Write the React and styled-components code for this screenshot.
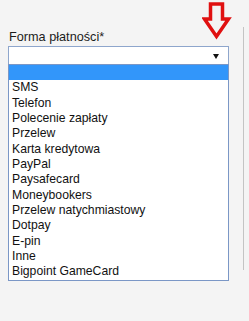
import React from "react";
import styled, { createGlobalStyle } from "styled-components";

const Global = createGlobalStyle`
  html, body { margin: 0; padding: 0; background: #f4f4f4; }
  body { font-family: Arial, "Liberation Sans", sans-serif; }
`;

const Page = styled.div`
  position: relative;
  width: 249px;
  height: 321px;
  display: flex;
  align-items: flex-start;
  overflow: hidden;
`;

const Field = styled.div`
  width: 221px;
  margin-left: 8px;
  padding-top: 30px;
  display: flex;
  flex-direction: column;
`;

const Label = styled.label`
  font-size: 12.7px;
  line-height: 15px;
  color: #1c1c1c;
  padding-left: 1px;
  margin-bottom: 1px;
`;

const SelectBox = styled.div`
  box-sizing: border-box;
  height: 18px;
  border: 1px solid #8ea6cc;
  border-bottom: none;
  background: #fff;
  display: flex;
  align-items: center;
  justify-content: flex-end;
  padding-right: 9px;
`;

const Caret = styled.span`
  width: 0;
  height: 0;
  border-left: 3px solid transparent;
  border-right: 3px solid transparent;
  border-top: 5px solid #111;
  margin-top: 1px;
`;

const List = styled.ul`
  list-style: none;
  margin: 0;
  padding: 0;
  box-sizing: border-box;
  border: 1px solid #7b97c6;
  background: #fff;
`;

const Option = styled.li`
  height: 15.33px;
  line-height: 15.33px;
  font-size: 12.2px;
  color: #111;
  padding-left: 3px;
  white-space: nowrap;
  background: ${(p) => (p.$selected ? "#3296fa" : "transparent")};
`;

const Divider = styled.div`
  width: 1px;
  height: 243px;
  margin-top: 27px;
  margin-left: 14px;
  background: #c4c4c4;
`;

const Arrow = styled.svg`
  position: absolute;
  left: 202px;
  top: 1px;
`;

const options = [
  "",
  "SMS",
  "Telefon",
  "Polecenie zapłaty",
  "Przelew",
  "Karta kredytowa",
  "PayPal",
  "Paysafecard",
  "Moneybookers",
  "Przelew natychmiastowy",
  "Dotpay",
  "E-pin",
  "Inne",
  "Bigpoint GameCard",
];

export default function App() {
  return (
    <>
      <Global />
      <Page>
        <Field>
          <Label>Forma płatności*</Label>
          <SelectBox>
            <Caret />
          </SelectBox>
          <List>
            {options.map((o, i) => (
              <Option key={i} $selected={i === 0}>
                {o}
              </Option>
            ))}
          </List>
        </Field>
        <Divider />
        <Arrow width="30" height="39" viewBox="0 0 30 39">
          <path
            d="M8.5 3 H20.5 V18 H26.5 L14.5 35.5 L2.5 18 H8.5 Z"
            fill="none"
            stroke="#e01010"
            strokeWidth="3.5"
            strokeLinejoin="miter"
          />
        </Arrow>
      </Page>
    </>
  );
}
